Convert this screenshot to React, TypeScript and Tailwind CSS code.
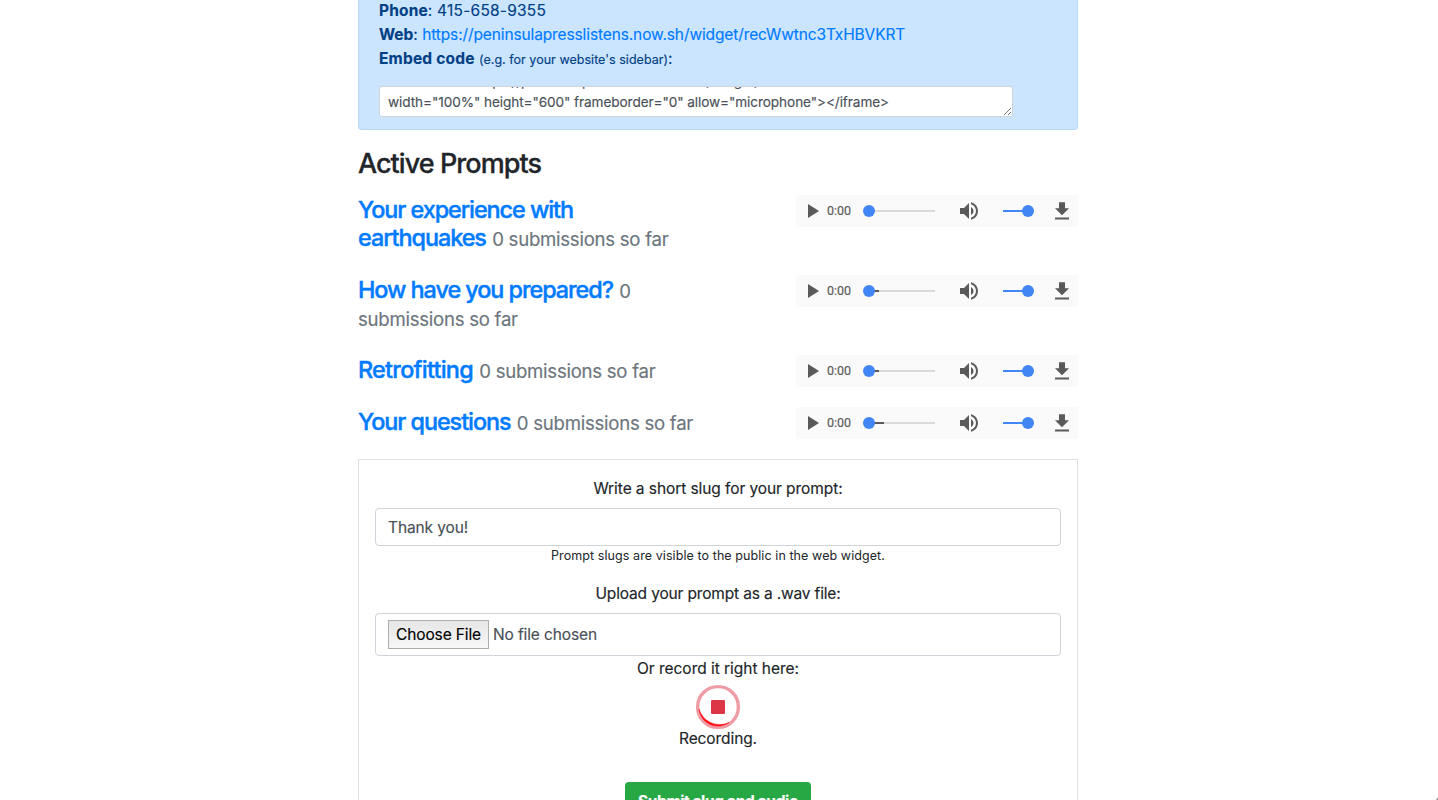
import type { ReactNode } from "react";

function AudioPlayer({ buffered }: { buffered: number }) {
  return (
    <div className="flex h-8 w-[282px] shrink-0 items-center bg-[#fafafa] pl-1 text-[#5a5a5a]">
      <svg className="size-6 shrink-0" viewBox="0 0 24 24" fill="currentColor">
        <path d="M8 5v14l11-7z" />
      </svg>
      <span className="ml-[3px] w-9 font-['Roboto',sans-serif] text-[12.5px] leading-4 [-webkit-text-stroke:0.15px]">0:00</span>
      <svg className="h-3 w-[72px] shrink-0" viewBox="0 0 72 12">
        <rect x="6" y="5" width="66" height="2" fill="#dadada" />
        <rect x="6" y="5" width={buffered} height="2" fill="#5a5a5a" />
        <circle cx="6" cy="6" r="6" fill="#4285f4" />
      </svg>
      <svg className="ml-[22px] size-6 shrink-0" viewBox="0 0 24 24" fill="currentColor">
        <path d="M3 9v6h4l5 5V4L7 9H3zm13.5 3c0-1.77-1.02-3.29-2.5-4.03v8.05c1.48-.73 2.5-2.25 2.5-4.02zM14 3.23v2.06c2.89.86 5 3.54 5 6.71s-2.11 5.85-5 6.71v2.06c4.01-.91 7-4.49 7-8.77s-2.99-7.86-7-8.77z" />
      </svg>
      <svg className="ml-[22px] h-3 w-[31px] shrink-0" viewBox="0 0 31 12" fill="#4285f4">
        <rect x="0" y="5" width="25" height="2" />
        <circle cx="25" cy="6" r="6" />
      </svg>
      <svg className="ml-4 size-6 shrink-0" viewBox="0 0 24 24" fill="currentColor">
        <path d="M19 9.3h-4V3.3H9v6H5l7 7 7-7zM5 18.6v2h14v-2H5z" />
      </svg>
    </div>
  );
}

function Prompt({ children, buffered, tall = false }: { children: ReactNode; buffered: number; tall?: boolean }) {
  return (
    <div className={tall ? "flex h-[60px] justify-between" : "flex h-8 justify-between"}>
      <h3 className="whitespace-nowrap pt-px text-[23.4px] font-medium leading-[28px] text-[#007bff]">{children}</h3>
      <AudioPlayer buffered={buffered} />
    </div>
  );
}

function Title({ children }: { children: ReactNode }) {
  return <a className="tracking-[-1.05px] [-webkit-text-stroke:0.4px]">{children}</a>;
}

function Count({ children }: { children: ReactNode }) {
  return (
    <small className="text-[18.6px] font-normal leading-[22px] tracking-[-0.26px] text-[#6c757d] [-webkit-text-stroke:0.15px]">
      {children}
    </small>
  );
}

export default function App() {
  return (
    <div className="relative h-[800px] w-full overflow-hidden bg-white font-['Inter',sans-serif] text-[15.5px] leading-6 text-[#212529] [-webkit-text-stroke:0.15px]">
      <main className="ml-[358px] w-[720px]">
        <section className="flex h-[130px] flex-col overflow-hidden rounded-b border border-t-0 border-[#b8daff] bg-[#cce5ff] px-5 text-[#004085]">
          <div className="-mt-px whitespace-nowrap">
            <strong className="font-bold tracking-[0.15px]">Phone</strong>
            <span className="tracking-[0.22px]">: 415-658-9355</span>
          </div>
          <div className="whitespace-nowrap">
            <strong className="font-bold">Web</strong>:{" "}
            <a className="tracking-[-0.12px] text-[#007bff]">https://peninsulapresslistens.now.sh/widget/recWwtnc3TxHBVKRT</a>
          </div>
          <div className="whitespace-nowrap">
            <strong className="font-bold tracking-[0.2px]">Embed code</strong>{" "}
            <small className="text-[12.5px] tracking-[0.03px]">(e.g. for your website's sidebar)</small>:
          </div>
          <div className="relative mt-3.5 h-[31px] w-[634px] overflow-hidden rounded-[3px] border border-[#ced4da] bg-white px-2 text-[13.6px] leading-[21px] tracking-[-0.078px] text-[#495057]">
            <div className="-mt-4 whitespace-nowrap">{'<iframe src="https://peninsulapresslistens.now.sh/widget/recWwtnc3TxHBVKRT"'}</div>
            <div className="whitespace-nowrap">{'width="100%" height="600" frameborder="0" allow="microphone"></iframe>'}</div>
            <svg className="absolute bottom-px right-px size-[7px]" viewBox="0 0 7 7" stroke="#555" strokeWidth="0.8" fill="none">
              <path d="M0 7 7 0M4 7 7 4" />
            </svg>
          </div>
        </section>

        <h2 className="mt-[17px] h-12 text-[27px] font-medium leading-[34px] tracking-[-0.95px] [-webkit-text-stroke:0.3px]">
          Active Prompts
        </h2>

        <div className="flex flex-col gap-5">
          <Prompt tall buffered={0}>
            <Title>Your experience with</Title>
            <br />
            <Title>earthquakes</Title> <Count>0 submissions so far</Count>
          </Prompt>
          <Prompt tall buffered={10}>
            <Title>How have you prepared?</Title> <Count>0</Count>
            <br />
            <Count>submissions so far</Count>
          </Prompt>
          <Prompt buffered={10}>
            <span className="tracking-[-0.74px] [-webkit-text-stroke:0.4px]">Retrofitting</span> <Count>0 submissions so far</Count>
          </Prompt>
          <Prompt buffered={15}>
            <Title>Your questions</Title> <Count>0 submissions so far</Count>
          </Prompt>
        </div>

        <form className="mt-5 flex h-[400px] flex-col items-center border border-[#dee2e6] px-4 pt-[17px]">
          <label className="tracking-[-0.08px]">Write a short slug for your prompt:</label>
          <div className="mt-[7px] flex h-[38px] w-full items-center rounded border border-[#ced4da] px-3 pt-0.5 tracking-[-0.12px] text-[#495057]">
            Thank you!
          </div>
          <small className="h-9 text-[12.5px] leading-5 tracking-[0.08px] [-webkit-text-stroke:0]">
            Prompt slugs are visible to the public in the web widget.
          </small>
          <label className="tracking-[-0.16px]">Upload your prompt as a .wav file:</label>
          <div className="mt-[7px] flex h-[43px] w-full items-center rounded border border-[#ced4da] px-3 tracking-[-0.12px] text-[#495057]">
            <span className="flex h-[29px] w-[101px] items-center justify-center whitespace-nowrap border border-[#adadad] bg-linear-to-b from-[#e6e6e6] to-[#f7f7f7] text-black">
              Choose File
            </span>
            <span className="ml-1">No file chosen</span>
          </div>
          <div className="mt-px tracking-[-0.03px]">Or record it right here:</div>
          <svg className="mt-[3px] h-[46px] w-[46px]" viewBox="0 0 46 46" fill="none">
            <circle cx="23" cy="23" r="20.4" stroke="#ef9ba4" strokeWidth="3.4" />
            <path d="M4 25A19 19 0 0 0 34 38.5A21.5 21.5 0 0 1 4 25Z" fill="#ff0b12" stroke="#ff0b12" strokeWidth="0.5" />
            <rect x="16" y="16" width="14" height="14" rx="1.2" fill="#dc3545" />
          </svg>
          <div className="-mt-[3px] tracking-[-0.09px]">Recording.</div>
          <button type="button" className="mt-[31px] h-[38px] w-[186px] shrink-0 whitespace-nowrap rounded bg-[#28a745] pt-px font-bold tracking-[-0.35px] text-white">
            Submit slug and audio
          </button>
        </form>
      </main>
      <svg className="absolute bottom-0 right-0 size-[3px]" viewBox="0 0 3 3">
        <path d="M3 0v3H1z" fill="#8a9095" />
      </svg>
    </div>
  );
}
